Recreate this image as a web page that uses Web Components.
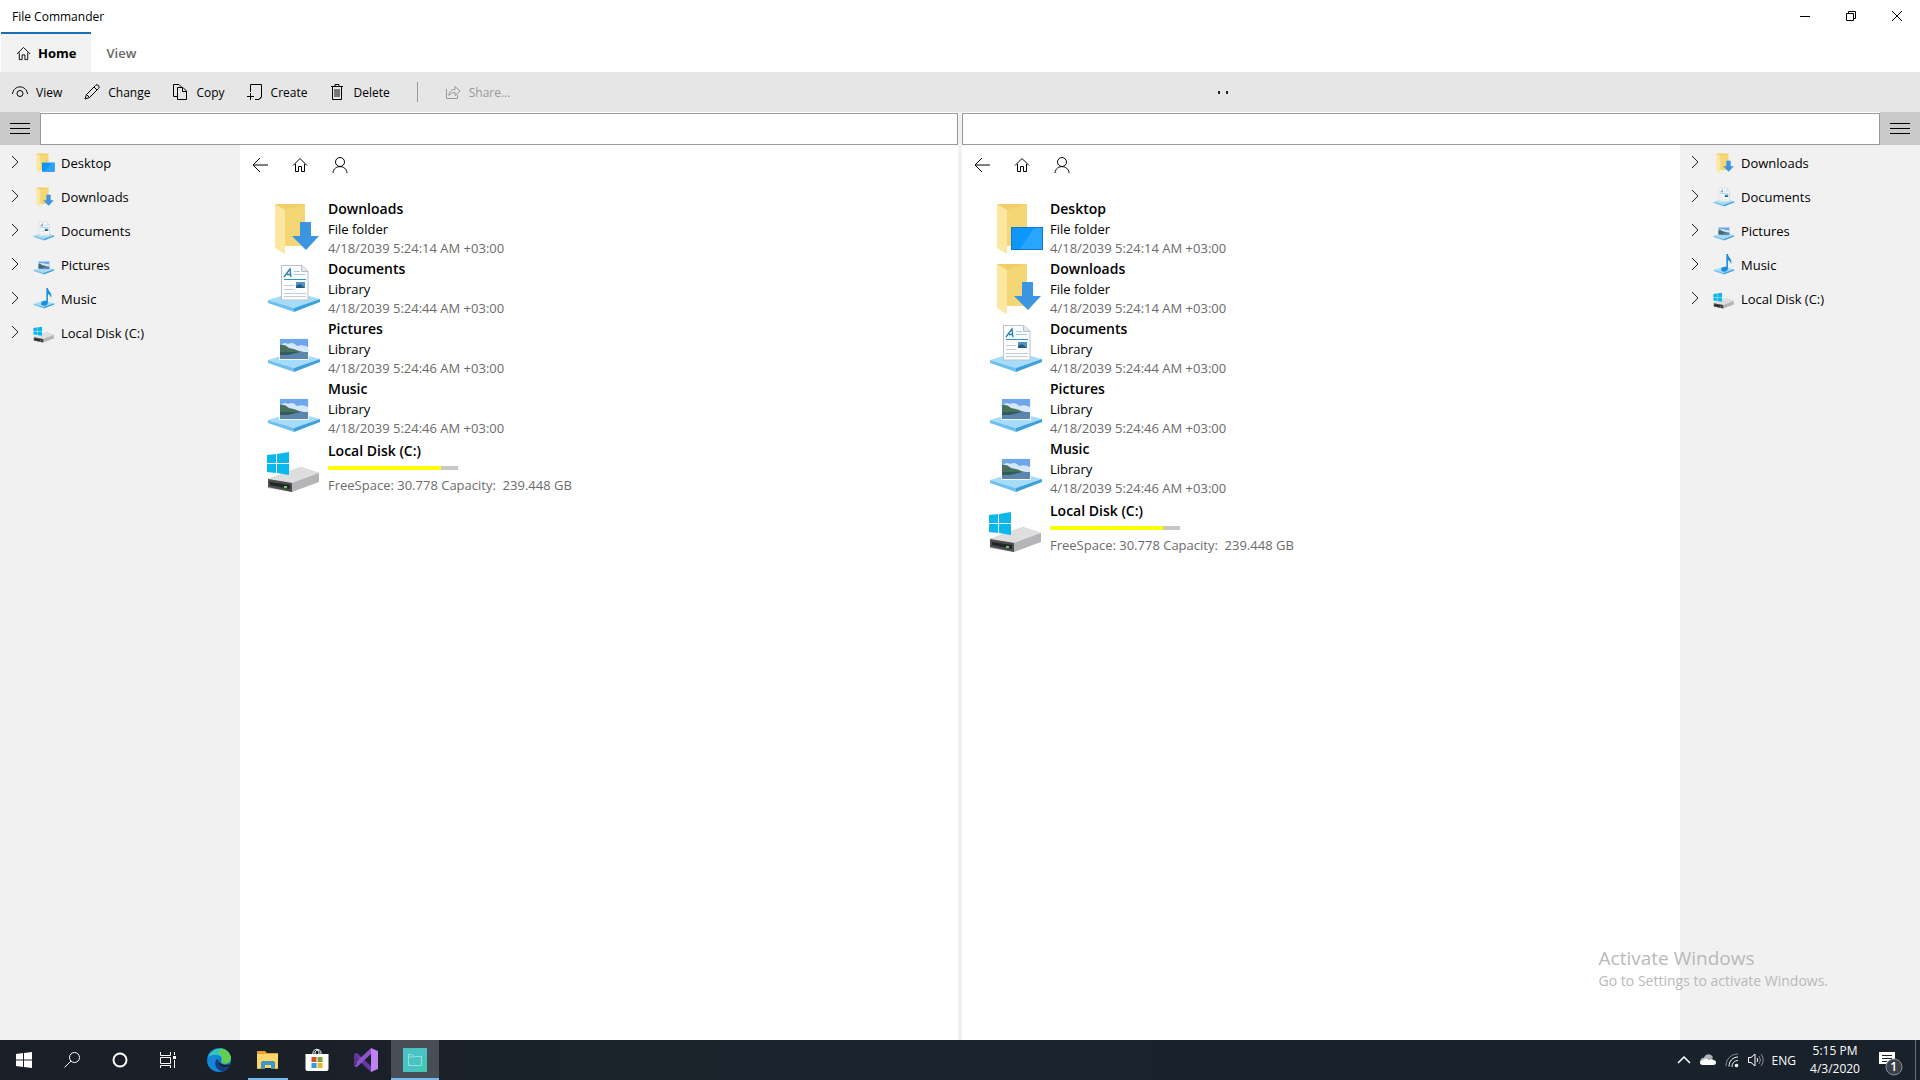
<!DOCTYPE html>
<html lang="en">
<head>
<meta charset="utf-8">
<title>File Commander</title>
<style>
  html, body {
    height: 100%;
    margin: 0;
    overflow: hidden;
  }

  body {
    font-family: "Open Sans", "Noto Sans", sans-serif;
    font-size: 13px;
    color: #000;
    background: #fff;
  }
</style>
</head>
<body>
<fc-desktop></fc-desktop>

<script>
const PLATFORM = `
  <path d="M2 42 28 34 54 41 28 50Z" fill="#a6dcfa"/>
  <path d="M2 42 28 50V54L2 45Z" fill="#6fc0ee"/>
  <path d="M28 50 54 41V44L28 54Z" fill="#3d9fdc"/>`;

const FOLDER = `
  <path d="M9 6H39V48H17Z" fill="#f2ce68"/>
  <path d="M19 12 39 6V48H19Z" fill="#f5d677"/>
  <path d="M9 6 19 12V56L9 50Z" fill="#fde6a0"/>`;

const PHOTO = `
  <path d="M13 20H43V42H13Z" fill="#f4f8fb"/>
  <path d="M14 21H42V35H14Z" fill="#6ea6ec"/>
  <path d="M14 28q4-5 8-2 5-3 9 2 6-2 11 1v6H14Z" fill="#d5e7fa"/>
  <path d="M14 27q5-1 9 3 6 1 10 3l9 2H14Z" fill="#47705f"/>
  <path d="M14 34H42V41H14Z" fill="#5c86ad"/>
  <path d="M14 34h20l-12 3h-8Z" fill="#355a5c"/>`;

// [viewBox, markup] per icon
const ICONS = {
  home: ["0 0 16 16", `<path d="M1 8.500 8 1.500 15 8.500M3.500 7V14.500H6.500V9.500H9.500V14.500H12.500V7"/>`],
  eye: ["0 0 16 16", `<path d="M.5 10C1.500 .5 14.500 .5 15.500 10"/><circle cx="8" cy="9.500" r="3"/>`],
  edit: ["0 0 16 16", `<path d="M1 15 2.500 10.500 11.500 1.500Q13-.2 14.500 1.500T14.500 4.500L5.500 13.500ZM10 3l3 3M2.500 10.500l3 3"/>`],
  copy: ["0 0 16 16", `<path d="M5 12.500H1.500V.5H7L9.500 3M5.500 3.500H11L14.500 7V15.500H5.500ZM10.500 3.500V7.500H14.500"/>`],
  create: ["0 0 16 16", `<path d="M3.500 8V.5H14.500V13L12 15.500H8M14.500 12.500 12 15.500M0 12.500H7M3.500 9V16"/>`],
  trash: ["0 0 16 16", `<path d="M5 5H11V13H5Z" fill="#777" stroke="none"/><path d="M2 2.500H14M6 2.500V.5H10V2.500M3.500 2.500V15.500H12.500V2.500"/>`],
  share: ["0 0 16 16", `<path d="M1.500 5V14.500H12.500V11M4 11.500C4 7 7 5.500 10 5.500V2.500L15 7 10 11.500V8.500C7.500 8.500 5.500 9 4 11.500Z"/>`],
  back: ["0 0 16 16", `<path d="M16 8H1M8 1 1 8 8 15"/>`],
  person: ["0 0 16 16", `<circle cx="8" cy="5" r="4.500"/><path d="M1 16C1.500 7.500 14.500 7.500 15 16"/>`],
  menu: ["0 0 20 16", `<path d="M0 2.500H20M0 7.500H20M0 12.500H20"/>`],
  chevron: ["0 0 8 12", `<path d="M1 0 7 6 1 12"/>`],
  minimize: ["0 0 12 12", `<path d="M1 6.500H11"/>`],
  restore: ["0 0 12 12", `<path d="M1.500 3.500H8.500V10.500H1.500ZM3.500 3.500V1.500H10.500V8.500H8.500"/>`],
  close: ["0 0 12 12", `<path d="M1 1 11 11M11 1 1 11"/>`],

  downloads: ["0 0 56 60", `${FOLDER}<path d="M34 24H45V38H53L40 52 26 38H34Z" fill="#3b95e0"/>`],
  desktop: ["0 0 56 60", `${FOLDER}<path d="M23 29H55V52H23Z" fill="#0f78d0"/><path d="M24 30H54V51H24Z" fill="#0d97fb"/><path d="M46 30H54V51H32Z" fill="#29a5fc"/>`],
  documents: ["0 0 56 60", `${PLATFORM}
    <path d="M15.500 7.500H36L42 13V42H15.500Z" fill="#fcfdfe" stroke="#b9c2c9"/>
    <path d="M35.500 7.500V13.500H42" fill="#e4e8eb" stroke="#b9c2c9"/>
    <path d="M18 19 24 11 25 19M21 16.500H25" fill="none" stroke="#2a7ba6" stroke-width="1.300"/>
    <path d="M28 13.500H34M28 16.500H39" stroke="#a2cbe6"/>
    <path d="M18 21.500H40" stroke="#3497b9"/>
    <path d="M18 27.500H28M18 31.500H28M18 35.500H40M18 38.500H40" stroke="#c9ccce"/>
    <path d="M30 24H39V30H30Z" fill="#4b95cb"/><path d="M30 28 34 26 39 30H30Z" fill="#275a75"/>`],
  pictures: ["0 0 56 60", PLATFORM + PHOTO],
  music: ["0 0 56 60", `${PLATFORM}<path d="M34 2H38C39 12 50 14 46 28 45 20 41 18 38 17V38C38 44 34 47 28 47S20 44 21 40 28 34 34 35Z" fill="#188fdc"/>`],
  disk: ["0 0 56 60", `
    <path d="M2 41 35 29 53 35V44L26 54 2 50Z" fill="#b5b5b7"/>
    <path d="M2 41 35 29 53 35 26 45Z" fill="#dededf"/>
    <path d="M2 41 26 45V54L2 49Z" fill="#4c4d4e"/>
    <path d="M4 44 24 47V51L4 47Z" fill="#242526"/><path d="M18 48h3v2h-3Z" fill="#65d35a"/>
    <path d="M1 17 10 16V25H1ZM11 16 23 14V25H11ZM1 26H10V35L1 34ZM11 26H23V37L11 35Z" fill="#0bb8ee"/>`],

  start: ["0 0 16 16", `<path d="M0 2 7 1V7.500H0ZM8 1 16 0V7.500H8ZM0 8.500H7V15L0 14ZM8 8.500H16V16L8 15Z" fill="#fff" stroke="none"/>`],
  search: ["0 0 16 16", `<circle cx="10.500" cy="5.500" r="5"/><path d="M7 9 .5 15.500"/>`],
  cortana: ["0 0 16 16", `<circle cx="8" cy="8" r="6.500" stroke-width="2"/>`],
  taskview: ["0 0 16 16", `<path d="M.5 0V3.500H10.500V0M.5 5.500H10.500V11.500H.5ZM.5 16V13.500H10.500V16M14.500 0V3M14.500 8V16"/><path d="M13 4H16V7H13Z" fill="#fff" stroke="none"/>`],
  edge: ["0 0 24 24", `
    <circle cx="12" cy="12" r="12" fill="#1475c8"/>
    <path d="M1 10C4-2 22-3 24 10 24 16 17 17 14 14 17 8 9 4 1 10Z" fill="#35c3c0"/>
    <path d="M14 .3C21 1 26 9 23 13.500 20 17 15 15.500 14.300 14 16 11 15 7 11 5Z" fill="#62cf52"/>
    <path d="M1 10C5 5 13 7 14 12 10 10 7 14 10 18 13 22 18 21 22 18 16 26 5 25 1 17Q0 14 1 10Z" fill="#1687d8"/>
    <path d="M10 11C6 15 9 23 16 23 19 22 21 20 22.500 17.500 18 20 13 19 11.500 15.500Q10.500 13 11.500 11.500Z" fill="#123e80"/>
    <path d="M12 13Q13 16.500 18 17 20 17 22.500 16V18C18 20 12 19 11.500 14.500Z" fill="#1b2029"/>`],
  explorer: ["0 0 24 24", `
    <path d="M1 3H9L11 5H22V20H1Z" fill="#e5a12c"/><path d="M1 6H22V20H1Z" fill="#fcd66b"/>
    <path d="M5 20V15Q5 13 7 13H17Q19 13 19 15V21H15V17H9V21H5Z" fill="#3f94c9"/><path d="M1 20H5V21H1ZM19 20H22V21H19Z" fill="#e4ae3a"/>`],
  store: ["0 0 24 24", `
    <path d="M8 7V5C8 0 16 0 16 5V7M10 7V4Q14-1 14 6" stroke="#fff" fill="none"/>
    <path d="M.5 6H23.500V21Q23.500 23 21.500 23H2.500Q.5 23 .5 21Z" fill="#fff"/>
    <path d="M6.500 9H11.500V14H6.500Z" fill="#d94f2b"/><path d="M12.500 9H17.500V14H12.500Z" fill="#7da72c"/>
    <path d="M6.500 15H11.500V20H6.500Z" fill="#2a9fdc"/><path d="M12.500 15H17.500V20H12.500Z" fill="#eab52b"/>`],
  studio: ["0 0 24 24", `
    <path d="M0 6 3 5 18 19 17 24 1 9Z" fill="#683aa4"/><path d="M0 18 3 19 18 5 17 0 1 15Z" fill="#8c55ca"/>
    <path d="M0 6 3 7.500V16.500L0 18Z" fill="#5b3191"/><path d="M17 0 24 3V21L17 24Z" fill="#bd83f1"/>`],
  commander: ["0 0 24 24", `
    <path d="M0 0H24V24H0Z" fill="#4bc3c4"/><path d="M12 24 24 8V24Z" fill="#43c9b3"/>
    <path d="M5.500 17.500V6.500H9.500L11 8.500H18.500V17.500ZM5.500 9H11" fill="none" stroke="#8ce3e0"/>`],
  up: ["0 0 16 16", `<path d="M2 11 8 5 14 11" stroke-width="1.500"/>`],
  cloud: ["0 0 16 16", `<path d="M1 11C-1 7 3 5 4 6 5 1 12 1 13 6Z" fill="#aeb1b5" stroke="none"/><path d="M3 13Q0 13 0 10.500T3 8Q6 5 9 8 11 6 13.500 8 16 8 16 10.500T13 13Z" fill="#fff" stroke="none"/>`],
  wifi: ["0 0 16 16", `<path d="M2 14C2 7 7 2 14 2" stroke="#8b9097"/><path d="M5 14.500C5 9 9 5 14 5M8 15C8 11 10.500 8.500 14 8.500"/><circle cx="12.500" cy="13.500" r="1.800" fill="#fff" stroke="none"/>`],
  speaker: ["0 0 16 16", `<path d="M.5 5.500H3L7 2V14L3 10.500H.5ZM9 6Q10.500 8 9 10"/><path d="M11 4Q14 8 11 12M13 2Q17.500 8 13 14" stroke="#8b9097"/>`],
  notice: ["0 0 26 26", `
    <path d="M1 2H17V14H12V18L8 14H1Z" fill="#fff" stroke="none"/><path d="M4 5.500H14M4 8.500H14M4 11.500H9" stroke="#1b222c"/>
    <circle cx="16" cy="17" r="8" fill="#3b414a" stroke="#8a8f96"/>`]
};

class FcIcon extends HTMLElement {
  constructor() {
    super();
    this.attachShadow({ mode: "open" });
  }

  connectedCallback() {
    const [viewBox, markup] = ICONS[this.getAttribute("name")];
    this.shadowRoot.innerHTML = `
    <style>
        :host{
            display: block;
            flex: none;
            width: 16px;
            height: 16px;
        }

        svg{
            display: block;
            width: 100%;
            height: 100%;
            overflow: visible;
        }

        .line{
            fill: none;
            stroke: currentColor;
        }
    </style>
    <svg viewBox="${viewBox}" aria-hidden="true" class="${this.hasAttribute("solid") ? "" : "line"}">${markup}</svg>
    `;
  }
}

customElements.define("fc-icon", FcIcon);

class TitleBar extends HTMLElement {
  constructor() {
    super();
    this.attachShadow({ mode: "open" });
    this.shadowRoot.innerHTML = `
    <style>
        :host{
            display: flex;
            align-items: center;
            height: 32px;
            padding-left: 12px;
            font-size: 12px;
        }

        .buttons{
            display: flex;
            height: 100%;
            margin-left: auto;
        }

        button{
            display: grid;
            place-items: center;
            width: 46px;
            border: 0;
            padding: 0;
            background: none;
            color: #000;
        }

        fc-icon{
            width: 12px;
            height: 12px;
        }
    </style>
    <slot></slot>
    <div class="buttons">
        <button aria-label="Minimize"><fc-icon name="minimize"></fc-icon></button>
        <button aria-label="Restore"><fc-icon name="restore"></fc-icon></button>
        <button aria-label="Close"><fc-icon name="close"></fc-icon></button>
    </div>
    `;
  }
}

customElements.define("fc-title-bar", TitleBar);

class TabStrip extends HTMLElement {
  constructor() {
    super();
    this.attachShadow({ mode: "open" });
    this.shadowRoot.innerHTML = `
    <style>
        :host{
            display: flex;
            height: 40px;
            padding-left: 1px;
        }

        button{
            display: flex;
            align-items: center;
            gap: 7px;
            box-sizing: border-box;
            border: 0;
            border-top: 2px solid transparent;
            padding: 0 15px;
            font: inherit;
            font-weight: 600;
            color: #666;
            background: none;
        }

        button[aria-selected="true"]{
            border-top-color: #1a70b4;
            font-weight: 700;
            color: #000;
            background: #f2f2f2;
        }

        fc-icon{
            width: 15px;
            height: 15px;
        }
    </style>
    <button role="tab" aria-selected="true"><fc-icon name="home"></fc-icon>Home</button>
    <button role="tab" aria-selected="false">View</button>
    `;
  }
}

customElements.define("fc-tab-strip", TabStrip);

class CommandBar extends HTMLElement {
  constructor() {
    super();
    this.attachShadow({ mode: "open" });
    this.shadowRoot.innerHTML = `
    <style>
        :host{
            display: grid;
            grid-template-columns: 1fr 1fr;
            height: 40px;
            background: #e6e6e6;
        }

        .commands{
            display: flex;
            align-items: center;
            padding-left: 1px;
        }

        button{
            display: flex;
            align-items: center;
            gap: 8px;
            height: 100%;
            border: 0;
            padding: 0 11px;
            font: inherit;
            font-size: 12px;
            color: #000;
            background: none;
        }

        button:disabled{
            color: #999;
        }

        hr{
            width: 1px;
            height: 20px;
            margin: 0 16px;
            border: 0;
            background: #999;
        }

        .progress{
            display: flex;
            align-items: center;
            gap: 6px;
            padding-left: 258px;
        }

        .progress i{
            width: 2px;
            height: 3px;
            background: #222;
        }
    </style>
    <div class="commands">
        <button><fc-icon name="eye"></fc-icon>View</button>
        <button><fc-icon name="edit"></fc-icon>Change</button>
        <button><fc-icon name="copy"></fc-icon>Copy</button>
        <button><fc-icon name="create"></fc-icon>Create</button>
        <button><fc-icon name="trash"></fc-icon>Delete</button>
        <hr>
        <button disabled><fc-icon name="share"></fc-icon>Share...</button>
    </div>
    <div class="progress"><i></i><i></i></div>
    `;
  }
}

customElements.define("fc-command-bar", CommandBar);

class TreeItem extends HTMLElement {
  constructor() {
    super();
    this.attachShadow({ mode: "open" });
    this.shadowRoot.innerHTML = `
    <style>
        :host{
            display: flex;
            align-items: center;
            height: 34px;
            padding-left: 11px;
        }

        button{
            display: flex;
            border: 0;
            padding: 0 0 2px;
            background: none;
            color: #222;
        }

        .chevron{
            width: 8px;
            height: 12px;
        }

        .glyph{
            width: 22px;
            height: 24px;
            margin: 0 6px 0 14px;
        }
    </style>
    <button aria-label="Expand"><fc-icon class="chevron" name="chevron"></fc-icon></button>
    <fc-icon class="glyph" solid name="${this.getAttribute("icon")}"></fc-icon>
    <slot></slot>
    `;
  }
}

customElements.define("fc-tree-item", TreeItem);

class FileRow extends HTMLElement {
  constructor() {
    super();
    this.attachShadow({ mode: "open" });
    this.shadowRoot.innerHTML = `
    <style>
        :host{
            display: flex;
            gap: 6px;
            height: 60px;
        }

        fc-icon{
            width: 56px;
            height: 60px;
        }

        .text{
            display: flex;
            flex-direction: column;
            line-height: 19px;
            white-space: pre;
        }

        :host([icon="disk"]) .text{
            padding-top: 2px;
        }

        ::slotted([slot="name"]){
            font-size: 14px;
            font-weight: 600;
            line-height: 22px;
        }

        ::slotted([slot="detail"]){
            color: #6b6b6b;
        }
    </style>
    <fc-icon solid name="${this.getAttribute("icon")}"></fc-icon>
    <div class="text"><slot name="name"></slot><slot></slot><slot name="detail"></slot></div>
    `;
  }
}

customElements.define("fc-file-row", FileRow);

class UsageBar extends HTMLElement {
  constructor() {
    super();
    this.attachShadow({ mode: "open" });
    this.shadowRoot.innerHTML = `
    <style>
        :host{
            display: flex;
            width: 130px;
            height: 4px;
            margin: 4px 0 6px;
            background: #c8c8c8;
        }

        div{
            width: ${this.getAttribute("value")}%;
            background: #ff0;
        }
    </style>
    <div></div>
    `;
  }
}

customElements.define("fc-usage-bar", UsageBar);

const PLACES = {
  desktop: ["Desktop", "File folder", "4/18/2039 5:24:14 AM +03:00"],
  downloads: ["Downloads", "File folder", "4/18/2039 5:24:14 AM +03:00"],
  documents: ["Documents", "Library", "4/18/2039 5:24:44 AM +03:00"],
  pictures: ["Pictures", "Library", "4/18/2039 5:24:46 AM +03:00"],
  music: ["Music", "Library", "4/18/2039 5:24:46 AM +03:00"],
  disk: ["Local Disk (C:)"]
};

function treeItem(key) {
  return `<fc-tree-item icon="${key}">${PLACES[key][0]}</fc-tree-item>`;
}

function fileRow(key) {
  const [name, type, date] = PLACES[key];
  if (key === "disk") {
    return `<fc-file-row icon="disk"><span slot="name">${name}</span><fc-usage-bar value="87"></fc-usage-bar><span slot="detail">FreeSpace: 30.778 Capacity:  239.448 GB</span></fc-file-row>`;
  }
  // the music library shows the same thumbnail as pictures
  const icon = key === "music" ? "pictures" : key;
  return `<fc-file-row icon="${icon}"><span slot="name">${name}</span><span>${type}</span><span slot="detail">${date}</span></fc-file-row>`;
}

class FilePane extends HTMLElement {
  constructor() {
    super();
    const tree = this.getAttribute("tree").split(" ");
    const files = this.getAttribute("files").split(" ");

    this.attachShadow({ mode: "open" });
    this.shadowRoot.innerHTML = `
    <style>
        :host{
            display: flex;
            flex-direction: column;
            min-width: 0;
        }

        .path, .body{
            display: flex;
        }

        :host([mirrored]) .path, :host([mirrored]) .body{
            flex-direction: row-reverse;
        }

        .path{
            height: 33px;
        }

        .path button{
            display: grid;
            place-items: center;
            width: 40px;
            border: 0;
            padding: 0;
            color: #000;
            background: #c9c9c9;
        }

        .path fc-icon{
            width: 20px;
        }

        input{
            flex: 1;
            min-width: 0;
            box-sizing: border-box;
            margin: 1px 0 0;
            border: 1px solid #999;
            border-radius: 0;
            padding: 0 8px;
            font: inherit;
            background: #fff;
        }

        .body{
            flex: 1;
        }

        aside{
            width: 240px;
            box-sizing: border-box;
            padding-top: 1px;
            background: #f1f1f1;
        }

        main{
            flex: 1;
        }

        nav{
            display: flex;
        }

        nav button{
            display: grid;
            place-items: center;
            width: 40px;
            height: 40px;
            border: 0;
            padding: 0;
            background: none;
            color: #000;
        }

        .files{
            padding: 13px 0 0 26px;
        }
    </style>
    <div class="path">
        <button aria-label="Toggle tree"><fc-icon name="menu"></fc-icon></button>
        <input type="text" aria-label="Path">
    </div>
    <div class="body">
        <aside>${tree.map(treeItem).join("")}</aside>
        <main>
            <nav>
                <button aria-label="Back"><fc-icon name="back"></fc-icon></button>
                <button aria-label="Home"><fc-icon name="home"></fc-icon></button>
                <button aria-label="User folder"><fc-icon name="person"></fc-icon></button>
            </nav>
            <div class="files">${files.map(fileRow).join("")}</div>
        </main>
    </div>
    `;
  }
}

customElements.define("fc-file-pane", FilePane);

class TaskButton extends HTMLElement {
  constructor() {
    super();
    const icon = this.getAttribute("icon");
    this.attachShadow({ mode: "open" });
    this.shadowRoot.innerHTML = `
    <style>
        :host{
            display: block;
            width: 48px;
            height: 40px;
        }

        button{
            display: grid;
            place-items: center;
            box-sizing: border-box;
            width: 100%;
            height: 100%;
            border: 0;
            padding: 0;
            color: #fff;
            background: none;
        }

        :host([app]) fc-icon{
            width: 24px;
            height: 24px;
        }

        :host([running]) button{
            background: linear-gradient(#76b9ed, #76b9ed) bottom / 40px 2px no-repeat;
        }

        :host([active]) button{
            background: linear-gradient(#76b9ed, #76b9ed) bottom / 100% 2px no-repeat #474e56;
        }
    </style>
    <button aria-label="${icon}"><fc-icon name="${icon}"${this.hasAttribute("app") ? " solid" : ""}></fc-icon></button>
    `;
  }
}

customElements.define("fc-task-button", TaskButton);

class Taskbar extends HTMLElement {
  constructor() {
    super();
    this.attachShadow({ mode: "open" });
    this.shadowRoot.innerHTML = `
    <style>
        :host{
            display: flex;
            justify-content: space-between;
            height: 40px;
            color: #fff;
            font-size: 12px;
            background: linear-gradient(90deg, #1a1e27, #1a232b 40%, #19212b);
        }

        .group, .apps, .tray{
            display: flex;
        }

        .apps{
            gap: 1px;
            margin-left: 3px;
        }

        .tray{
            align-items: center;
            gap: 8px;
        }

        .clock{
            width: 62px;
            margin-right: 4px;
            line-height: 18px;
            text-align: center;
        }

        .notice{
            position: relative;
            width: 26px;
            height: 26px;
            margin: 6px 3px 0 0;
        }

        .notice fc-icon{
            width: 26px;
            height: 26px;
        }

        .notice b{
            position: absolute;
            right: 7px;
            bottom: 1px;
            font-size: 12px;
            font-weight: 600;
        }

        .peek{
            width: 5px;
            height: 40px;
            border: 0;
            border-left: 1px solid #6d737a;
            padding: 0;
            background: none;
        }
    </style>
    <div class="group">
        <fc-task-button icon="start"></fc-task-button>
        <fc-task-button icon="search"></fc-task-button>
        <fc-task-button icon="cortana"></fc-task-button>
        <fc-task-button icon="taskview"></fc-task-button>
        <div class="apps">
            <fc-task-button app icon="edge"></fc-task-button>
            <fc-task-button app running icon="explorer"></fc-task-button>
            <fc-task-button app icon="store"></fc-task-button>
            <fc-task-button app icon="studio"></fc-task-button>
            <fc-task-button app active icon="commander"></fc-task-button>
        </div>
    </div>
    <div class="tray">
        <fc-icon name="up"></fc-icon>
        <fc-icon name="cloud"></fc-icon>
        <fc-icon name="wifi"></fc-icon>
        <fc-icon name="speaker"></fc-icon>
        <span>ENG</span>
        <div class="clock"><div>5:15 PM</div><div>4/3/2020</div></div>
        <div class="notice"><fc-icon name="notice"></fc-icon><b>1</b></div>
        <button class="peek" aria-label="Show desktop"></button>
    </div>
    `;
  }
}

customElements.define("fc-taskbar", Taskbar);

class Desktop extends HTMLElement {
  constructor() {
    super();
    this.attachShadow({ mode: "open" });
    this.shadowRoot.innerHTML = `
    <style>
        :host{
            display: flex;
            flex-direction: column;
            height: 100vh;
        }

        .panes{
            position: relative;
            display: grid;
            grid-template-columns: 1fr 1fr;
            gap: 4px;
            flex: 1;
            background: #f1f1f1;
        }

        fc-file-pane{
            background: #fff;
        }

        .watermark{
            position: absolute;
            right: 92px;
            bottom: 49px;
            line-height: 20px;
            font-size: 14px;
            color: #b9b9b9;
            pointer-events: none;
        }

        .watermark div:first-child{
            font-size: 19px;
            line-height: 26px;
        }
    </style>
    <fc-title-bar>File Commander</fc-title-bar>
    <fc-tab-strip role="tablist"></fc-tab-strip>
    <fc-command-bar></fc-command-bar>
    <div class="panes">
        <fc-file-pane
            tree="desktop downloads documents pictures music disk"
            files="downloads documents pictures music disk"></fc-file-pane>
        <fc-file-pane mirrored
            tree="downloads documents pictures music disk"
            files="desktop downloads documents pictures music disk"></fc-file-pane>
        <div class="watermark">
            <div>Activate Windows</div>
            <div>Go to Settings to activate Windows.</div>
        </div>
    </div>
    <fc-taskbar></fc-taskbar>
    `;
  }
}

customElements.define("fc-desktop", Desktop);
</script>
</body>
</html>
